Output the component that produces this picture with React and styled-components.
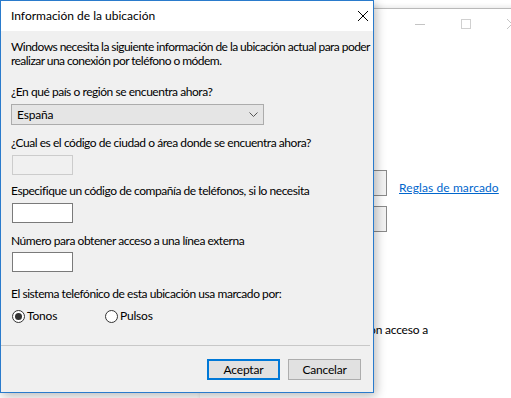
import styled, { createGlobalStyle } from 'styled-components';

const GlobalStyle = createGlobalStyle`
  html, body {
    margin: 0;
    padding: 0;
    background: #ffffff;
  }
  body {
    font-family: 'Lato', 'Noto Sans', sans-serif;
    font-size: 12px;
    color: #000000;
  }
`;

const Desktop = styled.div`
  position: relative;
  width: 511px;
  height: 398px;
  overflow: hidden;
  background: #ffffff;
`;

// ventana de fondo (Opciones de marcado)
const BackWindow = styled.div`
  position: absolute;
  left: 200px;
  top: 8px;
  width: 335px;
  height: 400px;
  background: #ffffff;
  border-top: 1px solid #b9b9b9;
  box-shadow: 0 -2px 4px rgba(0, 0, 0, 0.08);
  display: flex;
  flex-direction: column;
`;

const CaptionBar = styled.div`
  height: 30px;
  display: flex;
  justify-content: flex-end;
`;

const CaptionButton = styled.div`
  width: 46px;
  height: 30px;
  display: flex;
  align-items: center;
  justify-content: center;
`;

const BackBody = styled.div`
  padding-top: 131px;
  display: flex;
  flex-direction: column;
`;

const BackRow = styled.div`
  display: flex;
  align-items: center;
  margin-top: ${(p) => p.$top || 0}px;
`;

const BackInput = styled.div`
  width: 185px;
  height: 24px;
  border: 1px solid #8a8a8a;
  background: #f3f3f3;
`;

const Link = styled.a`
  margin-left: 12px;
  margin-top: 9px;
  color: #0066cc;
  text-decoration: underline;
  font-size: 12px;
  line-height: 14px;
  letter-spacing: 0.1px;
`;

const BackText = styled.div`
  width: 228px;
  margin-top: 91px;
  text-align: right;
  white-space: nowrap;
  line-height: 14px;
  letter-spacing: -0.2px;
`;

// diálogo
const Dialog = styled.div`
  position: absolute;
  left: 0;
  top: 0;
  width: 372px;
  height: 391px;
  border: 1px solid #2a7bcc;
  background: #f0f0f0;
  box-shadow: 2px 3px 10px rgba(0, 0, 0, 0.28);
  overflow: hidden;
  display: flex;
  flex-direction: column;
`;

const TitleBar = styled.div`
  height: 30px;
  background: #ffffff;
  display: flex;
  align-items: center;
  justify-content: space-between;
  padding-left: 10px;
`;

const Title = styled.div`
  font-size: 12px;
  line-height: 14px;
`;

const CloseButton = styled.div`
  width: 20px;
  height: 30px;
  display: flex;
  align-items: center;
  justify-content: center;
`;

const Body = styled.div`
  flex: 1;
  padding: 9px 0 0 10px;
  display: flex;
  flex-direction: column;
  letter-spacing: -0.45px;
`;

const Intro = styled.p`
  margin: 0;
  line-height: 14px;
  white-space: nowrap;
  letter-spacing: -0.55px;
`;

const Field = styled.div`
  display: flex;
  flex-direction: column;
  align-items: flex-start;
  gap: ${(p) => p.$gap || 5}px;
  margin-top: ${(p) => p.$top}px;
`;

const Label = styled.div`
  line-height: 14px;
  white-space: nowrap;
`;

const Select = styled.div`
  box-sizing: border-box;
  width: 253px;
  height: 21px;
  border: 1px solid #acacac;
  background: #e5e5e5;
  display: flex;
  align-items: center;
  justify-content: space-between;
  padding: 0 5px 0 5px;
  letter-spacing: -0.2px;
`;

const TextBox = styled.div`
  box-sizing: border-box;
  width: 61px;
  height: 20px;
  margin-left: 1px;
  border: 1px solid ${(p) => (p.$disabled ? '#cccccc' : '#7a7a7a')};
  background: ${(p) => (p.$disabled ? '#f0f0f0' : '#ffffff')};
`;

const RadioRow = styled.div`
  display: flex;
  margin-top: 8px;
  margin-left: 1px;
  letter-spacing: -0.2px;
`;

const RadioOption = styled.label`
  width: 93px;
  display: flex;
  align-items: center;
  gap: 2px;
  line-height: 14px;
`;

const RadioCircle = styled.span`
  box-sizing: border-box;
  width: 13px;
  height: 13px;
  border-radius: 50%;
  border: 1px solid #333333;
  background: #ffffff;
  display: flex;
  align-items: center;
  justify-content: center;

  &::after {
    content: '';
    width: 7px;
    height: 7px;
    border-radius: 50%;
    background: ${(p) => (p.$checked ? '#333333' : 'transparent')};
  }
`;

const Footer = styled.div`
  border-top: 1px solid #c8c8c8;
  margin-right: 3px;
  padding: 13px 9px 12px 0;
  display: flex;
  justify-content: flex-end;
  gap: 8px;
`;

const Button = styled.button`
  box-sizing: border-box;
  width: 73px;
  height: 21px;
  padding: 0;
  font-family: inherit;
  font-size: 12px;
  letter-spacing: -0.2px;
  color: #000000;
  background: #e1e1e1;
  border: ${(p) => (p.$default ? '2px solid #0078d7' : '1px solid #adadad')};
`;

function Chevron() {
  return (
    <svg width="9" height="5" viewBox="0 0 9 5">
      <path d="M0.5 0.5 L4.5 4.5 L8.5 0.5" fill="none" stroke="#555" strokeWidth="1" />
    </svg>
  );
}

function CloseIcon({ color = '#000', size = 10 }) {
  return (
    <svg width={size} height={size} viewBox="0 0 10 10">
      <path d="M0 0 L10 10 M10 0 L0 10" stroke={color} strokeWidth="1" />
    </svg>
  );
}

export default function App() {
  return (
    <Desktop>
      <GlobalStyle />
      <BackWindow>
        <CaptionBar>
          <CaptionButton>
            <svg width="10" height="1" viewBox="0 0 10 1">
              <rect width="10" height="1" fill="#c4c4c4" />
            </svg>
          </CaptionButton>
          <CaptionButton>
            <svg width="10" height="10" viewBox="0 0 10 10">
              <rect x="0.5" y="0.5" width="9" height="9" fill="none" stroke="#d0d0d0" />
            </svg>
          </CaptionButton>
          <CaptionButton>
            <CloseIcon color="#c4c4c4" />
          </CaptionButton>
        </CaptionBar>
        <BackBody>
          <BackRow>
            <BackInput />
            <Link href="#">Reglas de marcado</Link>
          </BackRow>
          <BackRow $top={10}>
            <BackInput />
          </BackRow>
          <BackText>Marcar para llamadas con acceso a</BackText>
        </BackBody>
      </BackWindow>

      <Dialog>
        <TitleBar>
          <Title>Información de la ubicación</Title>
          <CloseButton>
            <CloseIcon />
          </CloseButton>
        </TitleBar>
        <Body>
          <Intro>
            Windows necesita la siguiente información de la ubicación actual para poder
            <br />
            realizar una conexión por teléfono o módem.
          </Intro>

          <Field $top={17}>
            <Label>¿En qué país o región se encuentra ahora?</Label>
            <Select>
              <span>España</span>
              <Chevron />
            </Select>
          </Field>

          <Field $top={11}>
            <Label>¿Cual es el código de ciudad o área donde se encuentra ahora?</Label>
            <TextBox $disabled />
          </Field>

          <Field $top={9}>
            <Label>Especifique un código de compañía de teléfonos, si lo necesita</Label>
            <TextBox />
          </Field>

          <Field $top={11} $gap={4}>
            <Label>Número para obtener acceso a una línea externa</Label>
            <TextBox />
          </Field>

          <Field $top={15}>
            <Label>El sistema telefónico de esta ubicación usa marcado por:</Label>
          </Field>
          <RadioRow>
            <RadioOption>
              <RadioCircle $checked />
              Tonos
            </RadioOption>
            <RadioOption>
              <RadioCircle />
              Pulsos
            </RadioOption>
          </RadioRow>
        </Body>
        <Footer>
          <Button $default>Aceptar</Button>
          <Button>Cancelar</Button>
        </Footer>
      </Dialog>
    </Desktop>
  );
}
